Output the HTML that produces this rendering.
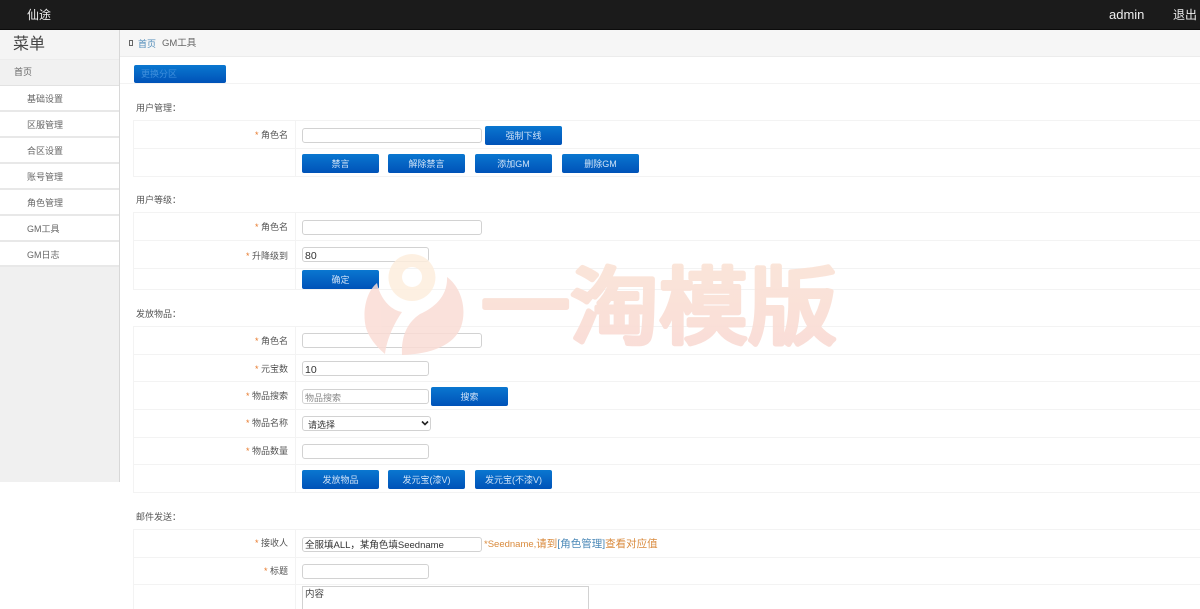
<!DOCTYPE html>
<html lang="zh"><head><meta charset="utf-8"><title>GM工具</title>
<style>
*{box-sizing:border-box}
html,body{margin:0;padding:0;width:1200px;height:609px;overflow:hidden;background:#fff;font-family:"Liberation Sans","Noto Sans CJK SC",sans-serif;color:#555}
#wrap{position:relative;width:1200px;height:609px;overflow:hidden;background:#fff}
.a{position:absolute}
.t{position:absolute;white-space:nowrap;line-height:14px}
#top{left:0;top:0;width:1200px;height:30px;background:#1b1b1b;border-bottom:1px solid #0c0c0c}
#side{left:0;top:30px;width:120px;height:452px;background:#f0f0f0;border-right:1px solid #d8d8d8}
.mi{position:absolute;left:0;width:119px;height:26px;background:#fff;border-bottom:2px solid #e8e8e8;font-size:9px;line-height:26px;padding-left:27px;color:#666}
.box{position:absolute;left:133px;width:1067px;border:1px solid #f3f3f3;border-right:0}
.vl{position:absolute;left:295px;width:1px;background:#f3f3f3}
.hl{position:absolute;left:133px;width:1067px;height:1px;background:#f3f3f3}
.sec{position:absolute;left:136px;font-size:9px;color:#555;line-height:14px;white-space:nowrap}
.lb{position:absolute;right:912px;font-size:9px;line-height:14px;color:#555;white-space:nowrap}
.lb i{font-style:normal;color:#e8792b}
.in{position:absolute;height:15px;border:1px solid #d2d2d2;border-radius:3px;background:#fff;font-size:9.5px;line-height:16px;padding-left:2px;color:#333;white-space:nowrap}
.btn{position:absolute;height:19px;width:77px;border-radius:2px;background:linear-gradient(#0a77d0,#0052b8);color:#cfe2f7;font-size:9px;line-height:20px;text-align:center;white-space:nowrap}
</style></head><body><div id="wrap">
<div class="a" id="top"></div>
<div class="t" style="left:27px;top:8px;font-size:12px;color:#eee">仙途</div>
<div class="t" style="left:1109px;top:8px;font-size:13px;color:#eee">admin</div>
<div class="t" style="left:1173px;top:8px;font-size:12px;color:#eee">退出</div>

<div class="a" id="side"></div>
<div class="a" style="left:0;top:30px;width:119px;height:30px;background:#f4f4f4;border-bottom:1px solid #ececec"></div>
<div class="t" style="left:13px;top:36px;font-size:16px;line-height:18px;color:#444">菜单</div>
<div class="a" style="left:0;top:60px;width:119px;height:26px;background:#f1f1f1;border-bottom:1px solid #e2e2e2;font-size:9px;line-height:25px;padding-left:14px;color:#666">首页</div>
<div class="mi" style="top:86px">基础设置</div>
<div class="mi" style="top:112px">区服管理</div>
<div class="mi" style="top:138px">合区设置</div>
<div class="mi" style="top:164px">账号管理</div>
<div class="mi" style="top:190px">角色管理</div>
<div class="mi" style="top:216px">GM工具</div>
<div class="mi" style="top:242px;height:25px">GM日志</div>

<div class="a" style="left:120px;top:30px;width:1080px;height:27px;background:#f6f6f6;border-bottom:1px solid #ececec"></div>
<div class="a" style="left:129px;top:40px;width:4px;height:6px;border:1px solid #666"></div>
<div class="t" style="left:138px;top:37px;font-size:9px;color:#4d8ab8">首页</div>
<div class="t" style="left:162px;top:37px;font-size:9.5px;color:#666">GM工具</div>

<div class="btn" style="left:134px;top:65px;width:92px;height:18px;line-height:19px;text-align:left;padding-left:7px;color:#3f8fdc">更换分区</div>
<div class="hl" style="left:120px;width:1080px;top:83px"></div>

<!-- section 1 -->
<div class="sec" style="top:101px">用户管理：</div>
<div class="box" style="top:120px;height:57px"></div>
<div class="hl" style="top:148px"></div>
<div class="vl" style="top:120px;height:57px"></div>
<div class="lb" style="top:128px"><i>* </i>角色名</div>
<div class="in" style="left:302px;top:128px;width:180px"></div>
<div class="btn" style="left:485px;top:126px">强制下线</div>
<div class="btn" style="left:302px;top:154px">禁言</div>
<div class="btn" style="left:388px;top:154px">解除禁言</div>
<div class="btn" style="left:475px;top:154px">添加GM</div>
<div class="btn" style="left:562px;top:154px">删除GM</div>

<!-- section 2 -->
<div class="sec" style="top:193px">用户等级：</div>
<div class="box" style="top:212px;height:78px"></div>
<div class="hl" style="top:240px"></div>
<div class="hl" style="top:268px"></div>
<div class="vl" style="top:212px;height:78px"></div>
<div class="lb" style="top:220px"><i>* </i>角色名</div>
<div class="in" style="left:302px;top:220px;width:180px"></div>
<div class="lb" style="top:249px"><i>* </i>升降级到</div>
<div class="in" style="left:302px;top:247px;width:127px;font-size:10.5px">80</div>
<div class="btn" style="left:302px;top:270px">确定</div>

<!-- section 3 -->
<div class="sec" style="top:307px">发放物品：</div>
<div class="box" style="top:326px;height:167px"></div>
<div class="hl" style="top:354px"></div>
<div class="hl" style="top:381px"></div>
<div class="hl" style="top:409px"></div>
<div class="hl" style="top:437px"></div>
<div class="hl" style="top:464px"></div>
<div class="vl" style="top:326px;height:167px"></div>
<div class="lb" style="top:334px"><i>* </i>角色名</div>
<div class="in" style="left:302px;top:333px;width:180px"></div>
<div class="lb" style="top:362px"><i>* </i>元宝数</div>
<div class="in" style="left:302px;top:361px;width:127px;font-size:10.5px">10</div>
<div class="lb" style="top:389px"><i>* </i>物品搜索</div>
<div class="in" style="left:302px;top:389px;width:127px;color:#888;font-size:9px">物品搜索</div>
<div class="btn" style="left:431px;top:387px">搜索</div>
<div class="lb" style="top:416px"><i>* </i>物品名称</div>
<div class="in" style="left:302px;top:416px;width:129px;padding-left:5px;font-size:9px;line-height:17px">请选择
<svg class="a" style="left:118px;top:3px" width="8" height="7" viewBox="0 0 8 7"><path d="M1 1.5 4 4.5 7 1.5" fill="none" stroke="#222" stroke-width="1.6"/></svg></div>
<div class="lb" style="top:444px"><i>* </i>物品数量</div>
<div class="in" style="left:302px;top:444px;width:127px"></div>
<div class="btn" style="left:302px;top:470px">发放物品</div>
<div class="btn" style="left:388px;top:470px">发元宝(漆V)</div>
<div class="btn" style="left:475px;top:470px">发元宝(不漆V)</div>

<!-- section 4 -->
<div class="sec" style="top:510px">邮件发送：</div>
<div class="box" style="top:529px;height:90px"></div>
<div class="hl" style="top:557px"></div>
<div class="hl" style="top:584px"></div>
<div class="vl" style="top:529px;height:80px"></div>
<div class="lb" style="top:536px"><i>* </i>接收人</div>
<div class="in" style="left:302px;top:537px;width:180px">全服填ALL，某角色填Seedname</div>
<div class="t" style="left:484px;top:537px;font-size:9.5px;color:#d98a3c">*Seedname,<span style="font-size:10.5px">请到<span style="color:#4d8ab8">[角色管理]</span>查看对应值</span></div>
<div class="lb" style="top:564px"><i>* </i>标题</div>
<div class="in" style="left:302px;top:564px;width:127px"></div>
<div class="a" style="left:302px;top:586px;width:287px;height:40px;border:1px solid #d2d2d2;font-size:9.5px;line-height:14px;padding:1px 0 0 2px;color:#444">内容</div>

<!-- watermark -->
<svg class="a" style="left:360px;top:250px;pointer-events:none" width="490" height="110" viewBox="0 0 490 110">
<defs><linearGradient id="g" x1="0" y1="0" x2="0" y2="1"><stop offset="0" stop-color="#fbe6d8"/><stop offset="1" stop-color="#f9dbd5"/></linearGradient></defs>
<g opacity=".85">
<path d="M17 33 C6 42 2 62 6 78 C10 90 18 98 25 104 C27 88 35 72 42 62 C30 60 20 48 17 33Z" fill="#fadcd5"/>
<path d="M87 27 C102 38 107 60 101 77 C94 95 72 104 42 105 C41 85 48 72 60 64 C74 58 88 46 87 27Z" fill="#fadcd5"/>
<path fill-rule="evenodd" d="M52 4 a23.5 23.5 0 1 1 -.1 0Z M52 17 a10 10 0 1 0 .1 0Z" fill="#fdeedd"/>
</g>
<text x="121" y="87" font-family="'Noto Sans CJK SC',sans-serif" font-weight="400" font-size="84" fill="url(#g)" stroke="url(#g)" stroke-width="5" stroke-linejoin="round" textLength="356" lengthAdjust="spacingAndGlyphs" opacity=".95">一淘模版</text>
</svg>
</div></body></html>
